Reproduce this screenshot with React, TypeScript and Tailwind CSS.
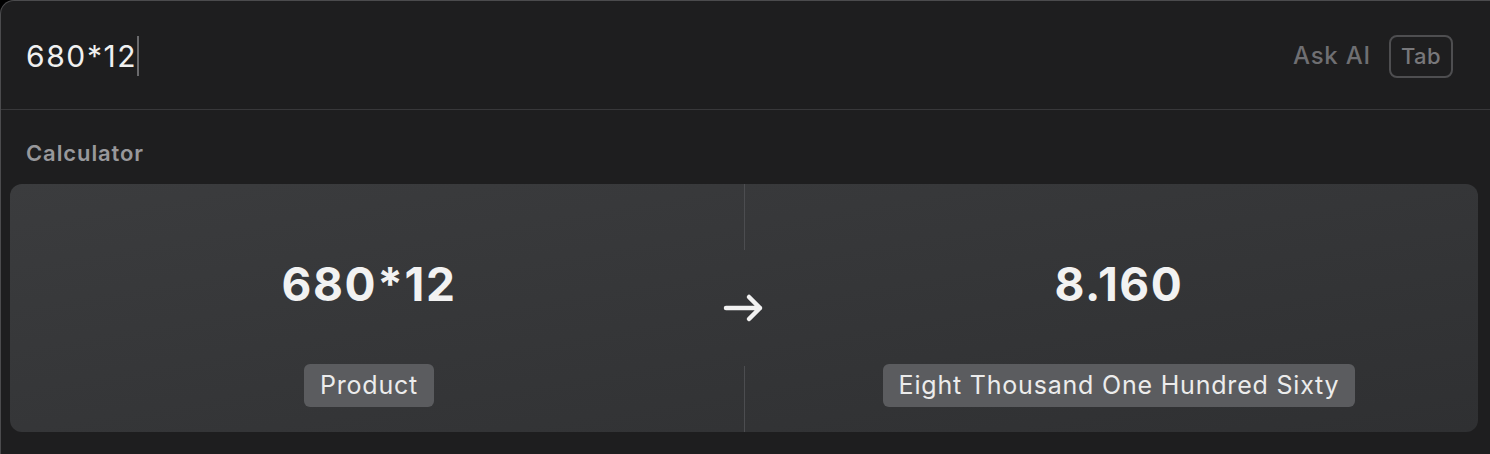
import * as React from 'react';

function ArrowRight() {
  return (
    <svg width="42" height="30" viewBox="0 0 42 30" fill="none">
      <path d="M3 15h34M26 4l11 11-11 11" stroke="#f2f2f2" strokeWidth="4.5" strokeLinecap="round" strokeLinejoin="round" />
    </svg>
  );
}

export default function App() {
  return (
    <div className="w-[1490px] h-[454px] bg-black overflow-hidden" style={{ fontFamily: 'Inter, "Noto Sans", sans-serif' }}>
      <div className="h-full w-full bg-[#1e1e1f] rounded-tl-[14px] border-t border-l border-[#4b4b4d] flex flex-col">
        <div className="h-[109px] shrink-0 flex items-center pl-[25px] pr-[37px] border-b border-[#38383a]">
          <div className="flex items-center text-[30px] text-[#f0f0f0] tracking-[1.6px] pt-[2px]">
            <span>680*12</span>
            <span className="w-[2px] h-[40px] bg-[#6a6a6c]" />
          </div>
          <div className="ml-auto flex items-center gap-[18px] pt-[2px]">
            <span className="text-[24px] text-[#6f6f72] font-medium tracking-[0.8px]">Ask AI</span>
            <span className="h-[43px] px-[10px] flex items-center rounded-[8px] border-2 border-[#4e4e50] text-[22px] text-[#78787b] font-medium tracking-[0.4px]">Tab</span>
          </div>
        </div>
        <div className="h-[74px] shrink-0 flex items-center pl-[25px] pt-[12px]">
          <span className="text-[22px] font-semibold text-[#98989b] tracking-[0.9px]">Calculator</span>
        </div>
        <div className="ml-[9px] mr-[12px] h-[248px] rounded-[12px] bg-gradient-to-br from-[#3b3c3e] to-[#2f3032] flex">
          <div className="flex-1 flex flex-col items-center pt-[76px]">
            <span className="text-[46px] font-bold text-[#f2f2f2] leading-[48px] tracking-[1.6px]">680*12</span>
            <span className="mt-[56px] h-[43px] px-[16px] flex items-center rounded-[6px] bg-[#5b5c5f] text-[25px] text-[#ececec] tracking-[0.8px]">Product</span>
          </div>
          <div className="w-[32px] flex flex-col items-center">
            <div className="w-[1px] h-[66px] bg-[#4c4d50]" />
            <div className="flex-1 flex items-center justify-center">
              <ArrowRight />
            </div>
            <div className="w-[1px] h-[66px] bg-[#4c4d50]" />
          </div>
          <div className="flex-1 flex flex-col items-center pt-[76px]">
            <span className="text-[46px] font-bold text-[#f2f2f2] leading-[48px] tracking-[1.6px]">8.160</span>
            <span className="mt-[56px] h-[43px] px-[16px] flex items-center rounded-[6px] bg-[#5b5c5f] text-[25px] text-[#ececec] tracking-[0.8px]">Eight Thousand One Hundred Sixty</span>
          </div>
        </div>
      </div>
    </div>
  );
}
